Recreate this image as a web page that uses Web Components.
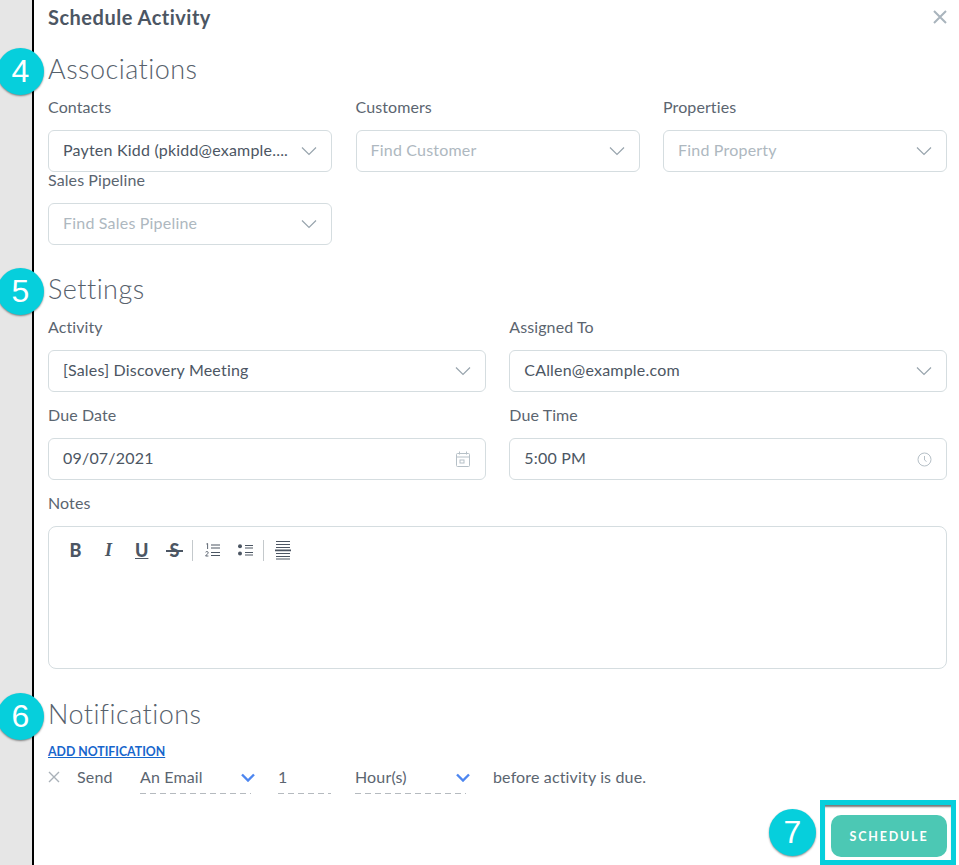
<!DOCTYPE html>
<html lang="en">
<head>
<meta charset="utf-8">
<title>Schedule Activity</title>
<style>
    html, body { margin: 0; height: 100%; background: #fff; }
    body { font-family: Lato, "Open Sans", sans-serif; color: #4c5663; overflow: hidden; }
</style>
</head>
<body>
<template id="shell-template">
<style>
    :host { display: flex; height: 865px; overflow: hidden; }
    .strip { flex: 0 0 32px; background: #e6e6e6; border-right: 2px solid #000; }
    .panel { flex: 1; position: relative; padding: 0 12px 0 14px; min-width: 0; }
</style>
<div class="strip"></div>
<div class="panel"><slot></slot></div>
</template>

<template id="header-template">
<style>
    :host { display: flex; justify-content: space-between; align-items: center; height: 34px; }
    h1 { margin: 0; font-size: 20px; font-weight: 700; color: #4c5663; letter-spacing: .5px; }
    svg { display: block; margin-right: -1px; margin-top: -1px; }
</style>
<h1><slot></slot></h1>
<svg width="16" height="16" viewBox="0 0 16 16" fill="none" stroke="#a9b4bd" stroke-width="2"><path d="M2 2l12 12M14 2L2 14"/></svg>
</template>

<template id="section-template">
<style>
    :host { display: block; position: relative; }
    h2 { margin: 0; font-size: 27px; font-weight: 300; line-height: 34px; color: #57616c; letter-spacing: .45px; }
    .badge {
        position: absolute; left: -51px; top: -4px; width: 47px; height: 47px; border-radius: 50%;
        background: #06cfdc; color: #fff; font-size: 32px; line-height: 47px; text-align: center;
        font-family: "Liberation Sans", sans-serif; box-shadow: 0 1px 2px rgba(0,0,0,.45);
    }
</style>
<div class="badge" id="badge"></div>
<h2 id="title"></h2>
<slot></slot>
</template>

<template id="field-template">
<style>
    :host { display: block; min-width: 0; }
    label { display: block; font-size: 16px; line-height: 16px; color: #5b6570; height: 31px; letter-spacing: .1px; }
    .box {
        display: flex; align-items: center; height: 42px; box-sizing: border-box;
        padding: 0 14px 0 14px; border: 1px solid #d5dde0; border-radius: 6px; background: #fff;
    }
    .value { flex: 1; min-width: 0; font-size: 16px; color: #4c5663; white-space: nowrap; letter-spacing: .2px; padding-bottom: 3px; }
    .value.placeholder { color: #aeb8c0; }
    svg { display: block; flex: none; }
</style>
<label id="label"></label>
<div class="box">
    <span class="value" id="value"></span>
    <span id="icon"></span>
</div>
</template>

<template id="editor-template">
<style>
    :host { display: block; }
    label { display: block; font-size: 16px; line-height: 16px; color: #5b6570; height: 31px; letter-spacing: .1px; }
    .box { height: 143px; box-sizing: border-box; border: 1px solid #d5dde0; border-radius: 8px; padding: 12px 0 0 20px; }
    .tools { display: flex; align-items: center; height: 22px; color: #4c5663; }
    .tool { width: 13px; margin-right: 20px; font-size: 18px; line-height: 22px; text-align: center; font-family: "Liberation Serif", serif; font-weight: 700; }
    .sans { font-family: Lato, sans-serif; font-weight: 900; }
    .u { text-decoration: underline; }
    .s { position: relative; margin-right: 11px; }
    .s::after { content: ""; position: absolute; left: -2px; right: -2px; top: 11px; height: 2px; background: #4c5663; }
    .sep { width: 1px; height: 21px; background: #c4c9cc; }
    svg { display: block; flex: none; }
</style>
<label>Notes</label>
<div class="box">
    <div class="tools">
        <span class="tool sans">B</span>
        <span class="tool" style="font-style:italic">I</span>
        <span class="tool sans u">U</span>
        <span class="tool sans s">S</span>
        <span class="sep"></span>
        <svg style="margin-left:12px" width="15" height="14" viewBox="0 0 15 14" fill="none" stroke="#4c5663">
            <path d="M6 2h9M6 5h9M6 9.5h9M6 12.5h9" stroke-width="1.1"/>
            <path d="M1.4 1l1.2-.5V6" stroke-width=".9"/>
            <path d="M.6 9.2c.5-.9 2.6-.9 2.6.4 0 1-1.8 2-2.6 3.4h2.8" stroke-width=".9"/>
        </svg>
        <svg style="margin-left:18px;margin-right:10px" width="15" height="14" viewBox="0 0 15 14" fill="#4c5663" stroke="none">
            <circle cx="2" cy="3.2" r="2"/><circle cx="2" cy="10.5" r="2"/>
            <path d="M7 2h8v1.1H7zM7 4.5h8v1.1H7zM7 9h8v1.1H7zM7 11.5h8v1.1H7z"/>
        </svg>
        <span class="sep"></span>
        <svg style="margin-left:11px" width="16" height="20" viewBox="0 0 16 20" fill="#4c5663" stroke="none">
            <path d="M1 1h14v1.1H1zM1 4h14v1.1H1zM1 7h14v1.1H1zM0 9.5h16v1.8H0zM1 13h14v1.1H1zM1 16h14v1.1H1zM1 18.5h14v1.1H1z"/>
        </svg>
    </div>
</div>
</template>

<template id="notify-template">
<style>
    :host { display: flex; align-items: flex-start; height: 40px; font-size: 16px; color: #5b6570; letter-spacing: .15px; }
    .x { width: 29px; padding-top: 7px; }
    .send { width: 63px; line-height: 22px; padding-top: 2px; }
    .pick { box-sizing: border-box; display: flex; justify-content: space-between; align-items: flex-start; height: 30px;
        line-height: 22px; padding-top: 2px;
        background-image: repeating-linear-gradient(90deg, #b5babf 0 6px, transparent 6px 10px);
        background-size: 100% 1px; background-position: 0 100%; background-repeat: no-repeat; }
    .pick svg { margin-top: 7px; }
    .tail { line-height: 22px; padding-top: 2px; padding-left: 6px; }
    svg { display: block; }
</style>
<div class="x"><svg width="12" height="12" viewBox="0 0 12 12" fill="none" stroke="#a9b1b8" stroke-width="1.4"><path d="M1 1l10 10M11 1L1 11"/></svg></div>
<div class="send">Send</div>
<div class="pick" style="width:111px;margin-right:27px"><span>An Email</span><svg style="margin-right:-4px" width="14" height="9" viewBox="0 0 14 9" fill="none" stroke="#4d86f0" stroke-width="2.4"><path d="M1 1.5l6 6 6-6"/></svg></div>
<div class="pick" style="width:53px;margin-right:24px"><span>1</span></div>
<div class="pick" style="width:111px;margin-right:21px"><span>Hour(s)</span><svg style="margin-right:-4px" width="14" height="9" viewBox="0 0 14 9" fill="none" stroke="#4d86f0" stroke-width="2.4"><path d="M1 1.5l6 6 6-6"/></svg></div>
<div class="tail">before activity is due.</div>
</template>

<template id="button-template">
<style>
    :host { position: absolute; right: 3px; top: 800px; width: 136px; height: 65px; box-sizing: border-box;
        border: 5px solid #06cfdc; background: #fff; box-shadow: inset 0 3px 2px -1px #777; }
    button { position: absolute; left: 6px; top: 10px; width: 116px; height: 42px; border: 0; border-radius: 10px;
        background: #4cc8b4; color: #fff; font: 700 12.5px Lato, sans-serif; letter-spacing: 1.8px; padding: 0; }
    .badge { position: absolute; left: -56px; top: 4px; width: 47px; height: 47px; border-radius: 50%;
        background: #06cfdc; color: #fff; font: 32px/47px "Liberation Sans", sans-serif; text-align: center;
        box-shadow: 0 1px 2px rgba(0,0,0,.45); }
</style>
<div class="badge">7</div>
<button><slot></slot></button>
</template>

<sa-shell>
    <sa-header>Schedule Activity</sa-header>

    <sa-section number="4" title="Associations" style="margin-top:18px">
        <sa-grid columns="3" style="margin-top:13px">
            <sa-field label="Contacts" value="Payten Kidd (pkidd@example...." icon="chevron"></sa-field>
            <sa-field label="Customers" placeholder="Find Customer" icon="chevron"></sa-field>
            <sa-field label="Properties" placeholder="Find Property" icon="chevron"></sa-field>
            <sa-field label="Sales Pipeline" placeholder="Find Sales Pipeline" icon="chevron"></sa-field>
        </sa-grid>
    </sa-section>

    <sa-section number="5" title="Settings" style="margin-top:27px">
        <sa-grid columns="2" row-gap="15" style="margin-top:13px">
            <sa-field label="Activity" value="[Sales] Discovery Meeting" icon="chevron"></sa-field>
            <sa-field label="Assigned To" value="CAllen@example.com" icon="chevron"></sa-field>
            <sa-field label="Due Date" value="09/07/2021" icon="calendar"></sa-field>
            <sa-field label="Due Time" value="5:00 PM" icon="clock"></sa-field>
        </sa-grid>
        <sa-editor style="margin-top:15px"></sa-editor>
    </sa-section>

    <sa-section number="6" title="Notifications" style="margin-top:28px">
        <sa-link style="margin-top:11px">ADD NOTIFICATION</sa-link>
        <sa-notify style="margin-top:4px"></sa-notify>
    </sa-section>

    <sa-button>SCHEDULE</sa-button>
</sa-shell>

<script>
    // Los iconos de los campos se comparten entre todas las instancias
    const ICONS = {
        chevron: '<svg width="16" height="10" viewBox="0 0 16 10" fill="none" stroke="#98a4ad" stroke-width="1.2"><path d="M1 1.5l7 7 7-7"/></svg>',
        calendar: '<svg width="16" height="17" viewBox="0 0 16 17" fill="none" stroke="#b6c0c7" stroke-width="1"><rect x="1.5" y="2.5" width="13" height="13" rx="1"/><path d="M1.5 6h13M4.5 .5v3M11.5 .5v3"/><rect x="5" y="9" width="4" height="3"/></svg>',
        clock: '<svg width="15" height="15" viewBox="0 0 15 15" fill="none" stroke="#b6c0c7" stroke-width="1"><circle cx="7.5" cy="7.5" r="6.5"/><path d="M7.5 4v4l2 1.5"/></svg>'
    };

    // Clona un template dentro de un Shadow DOM abierto
    function attach(host, id) {
        const shadow = host.attachShadow({ mode: 'open' });
        shadow.appendChild(document.getElementById(id).content.cloneNode(true));
        return shadow;
    }

    class SaShell extends HTMLElement {
        constructor() { super(); attach(this, 'shell-template'); }
    }

    class SaHeader extends HTMLElement {
        constructor() { super(); attach(this, 'header-template'); }
    }

    class SaSection extends HTMLElement {
        constructor() { super(); this.shadow = attach(this, 'section-template'); }
        connectedCallback() {
            this.shadow.getElementById('badge').textContent = this.getAttribute('number');
            this.shadow.getElementById('title').textContent = this.getAttribute('title');
        }
    }

    class SaGrid extends HTMLElement {
        constructor() {
            super();
            this.shadow = this.attachShadow({ mode: 'open' });
        }
        connectedCallback() {
            const columns = this.getAttribute('columns');
            const rowGap = this.getAttribute('row-gap') || 0;
            this.shadow.innerHTML = `
                <style>
                    :host { display: grid; grid-template-columns: repeat(${columns}, minmax(0, 1fr)); column-gap: 23.5px; row-gap: ${rowGap}px; }
                </style>
                <slot></slot>`;
        }
    }

    class SaField extends HTMLElement {
        constructor() { super(); this.shadow = attach(this, 'field-template'); }
        connectedCallback() {
            const value = this.shadow.getElementById('value');
            const placeholder = this.getAttribute('placeholder');
            this.shadow.getElementById('label').textContent = this.getAttribute('label');
            value.textContent = placeholder || this.getAttribute('value');
            value.classList.toggle('placeholder', !!placeholder);
            this.shadow.getElementById('icon').innerHTML = ICONS[this.getAttribute('icon')];
        }
    }

    class SaEditor extends HTMLElement {
        constructor() { super(); attach(this, 'editor-template'); }
    }

    class SaLink extends HTMLElement {
        constructor() {
            super();
            this.attachShadow({ mode: 'open' }).innerHTML = `
                <style>
                    :host { display: block; line-height: 16px; }
                    a { font-size: 12.3px; font-weight: 700; color: #1766cc; text-decoration: underline; }
                </style>
                <a href="#"><slot></slot></a>`;
        }
    }

    class SaNotify extends HTMLElement {
        constructor() { super(); attach(this, 'notify-template'); }
    }

    class SaButton extends HTMLElement {
        constructor() { super(); attach(this, 'button-template'); }
    }

    customElements.define('sa-shell', SaShell);
    customElements.define('sa-header', SaHeader);
    customElements.define('sa-section', SaSection);
    customElements.define('sa-grid', SaGrid);
    customElements.define('sa-field', SaField);
    customElements.define('sa-editor', SaEditor);
    customElements.define('sa-link', SaLink);
    customElements.define('sa-notify', SaNotify);
    customElements.define('sa-button', SaButton);
</script>
</body>
</html>
